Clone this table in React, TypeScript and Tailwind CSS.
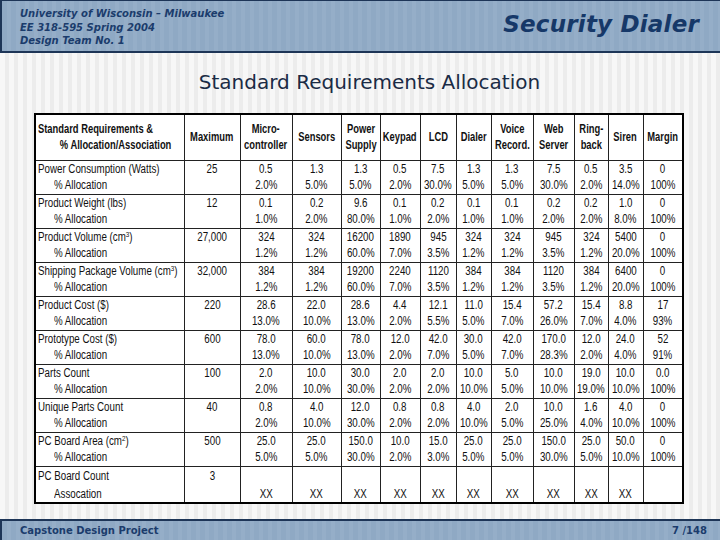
import React from 'react';

const colWidths = [149, 56, 52, 49, 39, 40, 36, 35, 42, 41, 34, 35, 40];

const heads: string[][] = [
  ['Maximum'],
  ['Micro-', 'controller'],
  ['Sensors'],
  ['Power', 'Supply'],
  ['Keypad'],
  ['LCD'],
  ['Dialer'],
  ['Voice', 'Record.'],
  ['Web', 'Server'],
  ['Ring-', 'back'],
  ['Siren'],
  ['Margin'],
];

interface Group {
  label: React.ReactNode;
  sub: string;
  max: string;
  values: string[];
  pcts: string[];
}

const groups: Group[] = [
  {
    label: 'Power Consumption (Watts)',
    sub: '% Allocation',
    max: '25',
    values: ['0.5', '1.3', '1.3', '0.5', '7.5', '1.3', '1.3', '7.5', '0.5', '3.5', '0'],
    pcts: ['2.0%', '5.0%', '5.0%', '2.0%', '30.0%', '5.0%', '5.0%', '30.0%', '2.0%', '14.0%', '100%'],
  },
  {
    label: 'Product Weight (lbs)',
    sub: '% Allocation',
    max: '12',
    values: ['0.1', '0.2', '9.6', '0.1', '0.2', '0.1', '0.1', '0.2', '0.2', '1.0', '0'],
    pcts: ['1.0%', '2.0%', '80.0%', '1.0%', '2.0%', '1.0%', '1.0%', '2.0%', '2.0%', '8.0%', '100%'],
  },
  {
    label: <>Product Volume (cm<sup className="text-[8px]">3</sup>)</>,
    sub: '% Allocation',
    max: '27,000',
    values: ['324', '324', '16200', '1890', '945', '324', '324', '945', '324', '5400', '0'],
    pcts: ['1.2%', '1.2%', '60.0%', '7.0%', '3.5%', '1.2%', '1.2%', '3.5%', '1.2%', '20.0%', '100%'],
  },
  {
    label: <>Shipping Package Volume (cm<sup className="text-[8px]">3</sup>)</>,
    sub: '% Allocation',
    max: '32,000',
    values: ['384', '384', '19200', '2240', '1120', '384', '384', '1120', '384', '6400', '0'],
    pcts: ['1.2%', '1.2%', '60.0%', '7.0%', '3.5%', '1.2%', '1.2%', '3.5%', '1.2%', '20.0%', '100%'],
  },
  {
    label: 'Product Cost ($)',
    sub: '% Allocation',
    max: '220',
    values: ['28.6', '22.0', '28.6', '4.4', '12.1', '11.0', '15.4', '57.2', '15.4', '8.8', '17'],
    pcts: ['13.0%', '10.0%', '13.0%', '2.0%', '5.5%', '5.0%', '7.0%', '26.0%', '7.0%', '4.0%', '93%'],
  },
  {
    label: 'Prototype Cost ($)',
    sub: '% Allocation',
    max: '600',
    values: ['78.0', '60.0', '78.0', '12.0', '42.0', '30.0', '42.0', '170.0', '12.0', '24.0', '52'],
    pcts: ['13.0%', '10.0%', '13.0%', '2.0%', '7.0%', '5.0%', '7.0%', '28.3%', '2.0%', '4.0%', '91%'],
  },
  {
    label: 'Parts Count',
    sub: '% Allocation',
    max: '100',
    values: ['2.0', '10.0', '30.0', '2.0', '2.0', '10.0', '5.0', '10.0', '19.0', '10.0', '0.0'],
    pcts: ['2.0%', '10.0%', '30.0%', '2.0%', '2.0%', '10.0%', '5.0%', '10.0%', '19.0%', '10.0%', '100%'],
  },
  {
    label: 'Unique Parts Count',
    sub: '% Allocation',
    max: '40',
    values: ['0.8', '4.0', '12.0', '0.8', '0.8', '4.0', '2.0', '10.0', '1.6', '4.0', '0'],
    pcts: ['2.0%', '10.0%', '30.0%', '2.0%', '2.0%', '10.0%', '5.0%', '25.0%', '4.0%', '10.0%', '100%'],
  },
  {
    label: <>PC Board Area (cm<sup className="text-[8px]">2</sup>)</>,
    sub: '% Allocation',
    max: '500',
    values: ['25.0', '25.0', '150.0', '10.0', '15.0', '25.0', '25.0', '150.0', '25.0', '50.0', '0'],
    pcts: ['5.0%', '5.0%', '30.0%', '2.0%', '3.0%', '5.0%', '5.0%', '30.0%', '5.0%', '10.0%', '100%'],
  },
  {
    label: 'PC Board Count',
    sub: 'Assocation',
    max: '3',
    values: ['', '', '', '', '', '', '', '', '', '', ''],
    pcts: ['XX', 'XX', 'XX', 'XX', 'XX', 'XX', 'XX', 'XX', 'XX', 'XX', ''],
  },
];

// Arial Narrow look: Liberation Sans squeezed horizontally
const Narrow = ({ children }: { children: React.ReactNode }) => (
  <span className="inline-block origin-left scale-x-[0.78] whitespace-nowrap">{children}</span>
);

const Center = ({ children }: { children: React.ReactNode }) => (
  <div className="flex justify-center">
    <span className="inline-block scale-x-[0.78] whitespace-nowrap">{children}</span>
  </div>
);

export default function App() {
  return (
    <div className="w-[720px] h-[540px] flex flex-col bg-[image:repeating-linear-gradient(90deg,#f7f7f7_0px,#f7f7f7_5px,#ececec_5px,#ececec_9px)] overflow-hidden">
      <header className="h-[53px] shrink-0 flex justify-between items-start border-t border-l-2 border-b-2 border-[#1d3557] bg-[image:repeating-linear-gradient(90deg,#8fa9c4_0px,#8fa9c4_5px,#95aec8_5px,#95aec8_9px)] pl-[18px] pr-[21px] font-['DejaVu_Sans',Verdana,sans-serif] text-[#1b3c6c]">
        <div className="pt-[6px] text-[10px] leading-[13.5px] font-bold italic">
          <div>University of Wisconsin – Milwaukee</div>
          <div>EE 318-595 Spring 2004</div>
          <div>Design Team No. 1</div>
        </div>
        <div className="pt-[10px] text-[23px] leading-[27px] font-bold italic tracking-[0.2px] text-[#163868]">
          Security Dialer
        </div>
      </header>

      <main className="flex-1 flex flex-col">
        <h1 className="h-[60px] pt-[17px] pl-[19px] text-center text-[20px] leading-[24px] font-['DejaVu_Sans',Verdana,sans-serif] text-[#1a2b45]">
          Standard Requirements Allocation
        </h1>
        <div className="pl-[34px]">
          <table className="w-[650px] table-fixed border-collapse border-2 border-black bg-white text-[#111] font-['Liberation_Sans',Arial,sans-serif]">
            <colgroup>
              {colWidths.map((w, i) => (
                <col key={i} style={{ width: w }} />
              ))}
            </colgroup>
            <thead>
              <tr className="h-[46px] text-[12px] leading-[16px] font-bold">
                <th className="border border-[#222] text-left align-middle pl-[2px]">
                  <Narrow>
                    Standard Requirements &amp;
                    <br />
                    <span className="pl-[28px]">% Allocation/Association</span>
                  </Narrow>
                </th>
                {heads.map((h, i) => (
                  <th key={i} className="border border-[#222] align-middle">
                    <Center>
                      {h.map((line, j) => (
                        <React.Fragment key={j}>
                          {j > 0 && <br />}
                          {line}
                        </React.Fragment>
                      ))}
                    </Center>
                  </th>
                ))}
              </tr>
            </thead>
            <tbody className="text-[12.5px] leading-[16px]">
              {groups.map((g, gi) => {
                const last = gi === groups.length - 1;
                return (
                  <React.Fragment key={gi}>
                    <tr className={last ? 'h-[19px]' : 'h-[17px]'}>
                      <td className="border-x border-t border-[#222] pl-[2px]">
                        <Narrow>{g.label}</Narrow>
                      </td>
                      <td className="border-x border-t border-[#222]">
                        <Center>{g.max}</Center>
                      </td>
                      {g.values.map((v, i) => (
                        <td key={i} className="border-x border-t border-[#222]">
                          <Center>{v}</Center>
                        </td>
                      ))}
                    </tr>
                    <tr className={last ? 'h-[18px]' : 'h-[17px]'}>
                      <td className="border-x border-[#222] pl-[18px]">
                        <Narrow>{g.sub}</Narrow>
                      </td>
                      <td className="border-x border-[#222]" />
                      {g.pcts.map((v, i) => (
                        <td key={i} className="border-x border-[#222]">
                          <Center>{v}</Center>
                        </td>
                      ))}
                    </tr>
                  </React.Fragment>
                );
              })}
            </tbody>
          </table>
        </div>
      </main>

      <footer className="h-[21px] shrink-0 flex items-center justify-between border-t-2 border-l-2 border-[#1d3557] bg-[image:repeating-linear-gradient(90deg,#8fa9c4_0px,#8fa9c4_5px,#95aec8_5px,#95aec8_9px)] pl-[18px] pr-[13px] font-['DejaVu_Sans',Verdana,sans-serif] text-[10px] font-bold text-[#1b3c6c]">
        <span>Capstone Design Project</span>
        <span>7 /148</span>
      </footer>
    </div>
  );
}
